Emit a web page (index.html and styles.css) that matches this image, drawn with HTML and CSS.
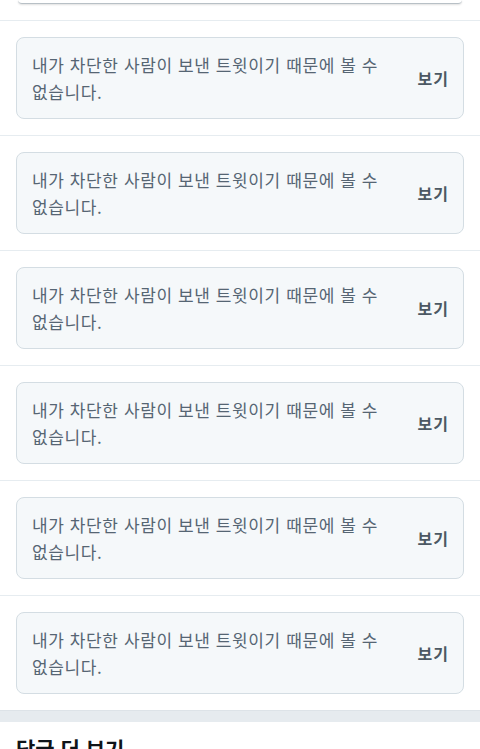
FILE: index.html
```html
<!DOCTYPE HTML>
<html lang="ko">

<head>
    <meta charset="utf-8">
    <link rel="stylesheet" href="styles.css">
</head>

<body>

    <div class="prev">
        <div class="prev-card"></div>
    </div>

    <div class="thread">
        <div class="row">
            <div class="notice">
                <p class="notice-text">내가 차단한 사람이 보낸 트윗이기 때문에 볼 수 없습니다.</p>
                <span class="notice-btn">보기</span>
            </div>
        </div>
        <div class="row">
            <div class="notice">
                <p class="notice-text">내가 차단한 사람이 보낸 트윗이기 때문에 볼 수 없습니다.</p>
                <span class="notice-btn">보기</span>
            </div>
        </div>
        <div class="row">
            <div class="notice">
                <p class="notice-text">내가 차단한 사람이 보낸 트윗이기 때문에 볼 수 없습니다.</p>
                <span class="notice-btn">보기</span>
            </div>
        </div>
        <div class="row">
            <div class="notice">
                <p class="notice-text">내가 차단한 사람이 보낸 트윗이기 때문에 볼 수 없습니다.</p>
                <span class="notice-btn">보기</span>
            </div>
        </div>
        <div class="row">
            <div class="notice">
                <p class="notice-text">내가 차단한 사람이 보낸 트윗이기 때문에 볼 수 없습니다.</p>
                <span class="notice-btn">보기</span>
            </div>
        </div>
        <div class="row">
            <div class="notice">
                <p class="notice-text">내가 차단한 사람이 보낸 트윗이기 때문에 볼 수 없습니다.</p>
                <span class="notice-btn">보기</span>
            </div>
        </div>
    </div>

    <div class="band"></div>

    <h2 class="more">답글 더 보기</h2>

</body>

</html>
```

FILE: styles.css
```css
/* блок скрытых ответов */

html,
body {
    margin: 0;
    padding: 0;
    background: #fff;
    font-family: "Noto Sans CJK KR", "Noto Sans", sans-serif;
}

.prev {
    padding: 0 18px 16px 18px;
}

.prev-card {
    height: 3px;
    border-bottom: 1px solid #b8c0c6;
    border-radius: 0 0 8px 8px;
    box-shadow: 0 1px 2px rgba(0, 0, 0, 0.12);
}

.row {
    border-top: 1px solid #e6ecf0;
    padding: 16px;
}

.notice {
    display: flex;
    align-items: center;
    height: 82px;
    box-sizing: border-box;
    padding: 0 14px 0 15px;
    background-color: #f5f8fa;
    border: 1px solid #d4dde3;
    border-radius: 8px;
}

.notice-text {
    flex: 1;
    margin: 0 24px 0 0;
    font-size: 17px;
    line-height: 27px;
    letter-spacing: 0.6px;
    word-break: keep-all;
    color: #566573;
}

.notice-btn {
    font-size: 16px;
    font-weight: bold;
    letter-spacing: 1px;
    color: #4c5863;
}

.band {
    height: 11px;
    border-top: 1px solid #dde3e8;
    background-color: #e6ebef;
}

.more {
    margin: 0;
    padding: 11px 16px;
    font-size: 21px;
    font-weight: bold;
    color: #0f1419;
}
```
